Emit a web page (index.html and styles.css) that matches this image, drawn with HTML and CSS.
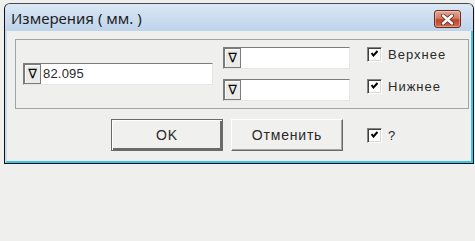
FILE: index.html
```html
<!DOCTYPE html>
<html lang="ru">
<head>
  <meta charset="UTF-8">
  <title>Измерения</title>
  <link rel="stylesheet" href="styles.css">
</head>
<body>

<div class="window">
  <!-- Title bar -->
  <div class="titlebar">
    <span class="title">Измерения ( мм. )</span>
    <button class="close" title="Закрыть">
      <svg width="13" height="11" viewBox="0 0 13 11">
        <path d="M2 1.5 L11 9.5 M11 1.5 L2 9.5" stroke="#5a2a22" stroke-width="4" stroke-linecap="round"/>
        <path d="M2 1.5 L11 9.5 M11 1.5 L2 9.5" stroke="#fff" stroke-width="2.4" stroke-linecap="round"/>
      </svg>
    </button>
  </div>

  <div class="client">
    <div class="group">
      <div class="field main">
        <span class="drop">∇</span>
        <span class="value">82.095</span>
      </div>

      <div class="limits">
        <div class="field"><span class="drop">∇</span><span class="value"></span></div>
        <div class="field"><span class="drop">∇</span><span class="value"></span></div>
      </div>

      <div class="checks">
        <label class="check"><span class="box checked"></span>Верхнее</label>
        <label class="check"><span class="box checked"></span>Нижнее</label>
      </div>
    </div>

    <div class="actions">
      <button class="btn default">OK</button>
      <button class="btn">Отменить</button>
      <label class="check"><span class="box checked"></span>?</label>
    </div>
  </div>
</div>

</body>
</html>
```

FILE: styles.css
```css
body {
  margin: 0;
  background: #eff0ed;
  font-family: 'Liberation Sans', Arial, sans-serif;
  font-size: 13px;
  color: #2a2a2a;
}

.window {
  width: 468px;
  height: 159px;
  margin: 3px 0 0 4px;
  border: 1px solid #111;
  border-top-color: #4a4a4a;
  border-radius: 6px 6px 0 0;
  background: #bcd3eb;
  display: flex;
  flex-direction: column;
}

.titlebar {
  height: 27px;
  flex: none;
  display: flex;
  align-items: center;
  justify-content: space-between;
  padding: 0 12px 0 6px;
  border-radius: 5px 5px 0 0;
  background: linear-gradient(#dbe7f4, #bed4ec);
}

.title {
  font-family: 'Noto Sans', sans-serif;
  font-size: 15px;
  line-height: 18px;
  color: #1e1e1e;
  margin-top: 1px;
}

.close {
  width: 27px;
  height: 18px;
  padding: 0;
  margin-top: 3px;
  display: flex;
  align-items: center;
  justify-content: center;
  border: 1px solid #6b2a1e;
  border-radius: 3px;
  background: linear-gradient(#e3a894, #d27a63 45%, #c2432a 55%, #d06a4e);
  box-shadow: inset 0 0 0 1px rgba(255,255,255,0.35);
}

.client {
  flex: 1;
  overflow: hidden;
  background: #eff0ed;
  border-left: 2px solid #c7dbef;
  border-right: 2px solid #3bc3ee;
  border-bottom: 2px solid #3bc3ee;
}

.group {
  width: 445px;
  height: 68px;
  margin: 8px 0 0 8px;
  border: 1px solid #a3a3a3;
  display: flex;
  align-items: center;
  padding-left: 7px;
}

.field {
  display: flex;
  height: 20px;
  width: 125px;
  border: 1px solid;
  border-color: #7d7d7d #e6e6e6 #e6e6e6 #7d7d7d;
  background: #fff;
}

.field.main {
  width: 188px;
  margin-right: 10px;
}

.drop {
  width: 17px;
  flex: none;
  border: 1px solid #7b7b7b;
  box-sizing: border-box;
  background: #ebebe9;
  box-shadow: inset 1px 1px #fff;
  font-family: 'DejaVu Sans', sans-serif;
  font-size: 13px;
  line-height: 18px;
  text-align: center;
  color: #000;
}

.value {
  padding-left: 2px;
  line-height: 20px;
  letter-spacing: 0.2px;
}

.limits {
  display: flex;
  flex-direction: column;
  gap: 10px;
  margin-right: 17px;
}

.checks {
  align-self: flex-start;
  margin-top: 7px;
  display: flex;
  flex-direction: column;
  gap: 17px;
}

.check {
  display: flex;
  align-items: center;
  gap: 6px;
  line-height: 15px;
  letter-spacing: 1px;
}

.box {
  width: 13px;
  height: 13px;
  flex: none;
  border: 1px solid;
  border-color: #858585 #fff #fff #858585;
  box-shadow: inset 1px 1px #404040, inset -1px -1px #d8d8d4;
  background: #fff;
  position: relative;
}

.box.checked::after {
  content: "";
  position: absolute;
  left: 3px;
  top: 2px;
  width: 7px;
  height: 7px;
  background: url("data:image/svg+xml;utf8,<svg xmlns='http://www.w3.org/2000/svg' width='7' height='7'><path d='M0.5 3 L2.5 5.5 L6.5 1' fill='none' stroke='black' stroke-width='2'/></svg>");
}

.actions {
  display: flex;
  align-items: center;
  gap: 8px;
  margin: 10px 0 0 104px;
}

.btn {
  width: 112px;
  height: 32px;
  flex: none;
  font-family: 'Liberation Sans', Arial, sans-serif;
  font-size: 14px;
  letter-spacing: 0.8px;
  color: #2a2a2a;
  background: #f0f0ee;
  border: 1px solid;
  border-color: #fff #6a6a6a #6a6a6a #fff;
  box-shadow: inset -1px -1px #a5a5a5;
}

.btn.default {
  border-color: #6a6a6a;
  box-shadow: inset 1px 1px #fff, inset -2px -2px #6a6a6a;
}

.actions .check {
  margin-left: 16px;
}
```
